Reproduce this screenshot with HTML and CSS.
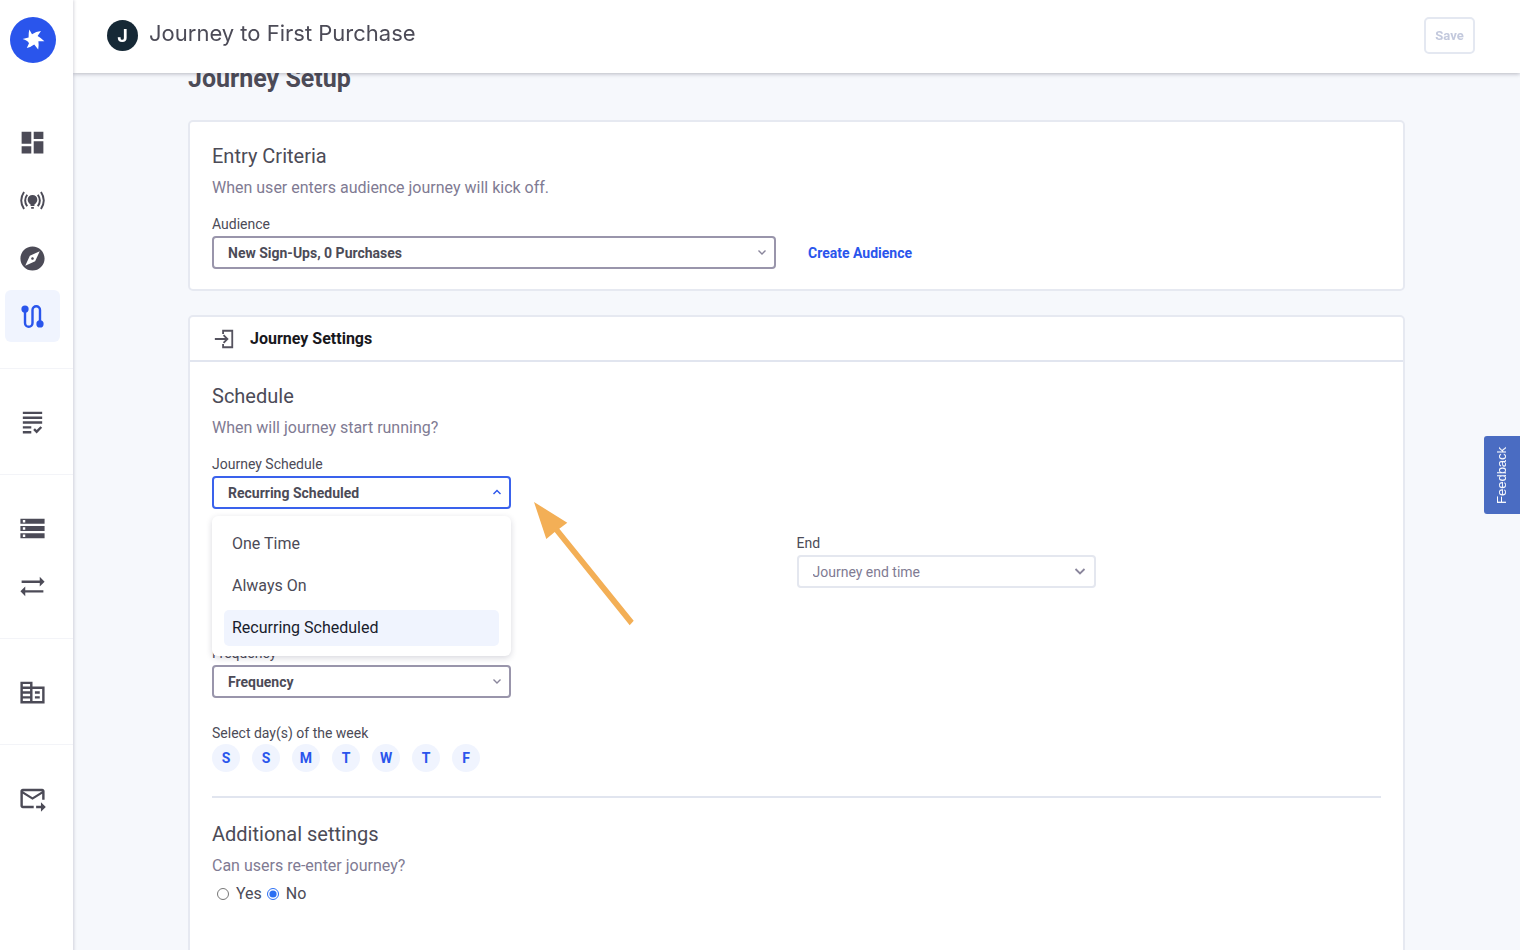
FILE: index.html
```html
<!DOCTYPE html>
<html lang="en">
<head>
<meta charset="utf-8">
<meta name="viewport" content="width=device-width, initial-scale=1">
<title>Journey to First Purchase</title>
<link rel="stylesheet" href="styles.css">
</head>
<body>
<div class="app">
  <nav class="sidebar" aria-label="Main">
    <a class="logo" href="#" aria-label="Home">
      <svg viewBox="0 0 46 46" width="46" height="46"><path fill="#fff" d="M19.300 12.600L22 17.200Q26 14.600 31 14L27.600 19Q31 20.800 34.400 24.300L28.400 24.300Q29 28 28.200 32.400L24.200 27.600Q21 30.200 16.800 30.900L19 26.200Q17.500 23.200 12.600 22L18.600 20.600Q18.400 16.500 19.300 12.600Z"/></svg>
    </a>
    <div class="nav-group">
      <a class="nav-item" href="#" aria-label="Dashboard"><svg class="icon" viewBox="0 0 24 24"><path d="M3 13h8V3H3v10zm0 8h8v-6H3v6zm10 0h8V11h-8v10zm0-18v6h8V3h-8z"/></svg></a>
      <a class="nav-item" href="#" aria-label="Campaigns"><svg class="icon" viewBox="0 0 24 24"><path d="M12 7.400a4 4 0 0 0-4 4c0 1.600.9 2.800 2.400 3.900v1.200h3.200v-1.200c1.500-1.100 2.400-2.300 2.400-3.900a4 4 0 0 0-4-4zM10.900 17.400h2.200v1.400h-2.200z"/><path class="stroke" d="M7.600 7.200c-2.100 3-2.100 6.600 0 9.600M16.400 7.200c2.100 3 2.100 6.600 0 9.600M5 5c-3 4.500-3 9.500 0 14M19 5c3 4.500 3 9.500 0 14"/></svg></a>
      <a class="nav-item" href="#" aria-label="Explore"><svg class="icon" viewBox="0 0 24 24"><path d="M12 10.900c-.61 0-1.100.49-1.100 1.100s.49 1.100 1.100 1.100c.61 0 1.100-.49 1.100-1.100s-.49-1.100-1.100-1.100zM12 2C6.480 2 2 6.480 2 12s4.480 10 10 10 10-4.480 10-10S17.520 2 12 2zm2.190 12.190L6 18l3.810-8.190L18 6l-3.810 8.190z"/></svg></a>
      <a class="nav-item is-active" href="#" aria-label="Journeys" aria-current="page"><svg class="icon" viewBox="0 0 24 24"><circle cx="5.800" cy="5.800" r="3"/><circle cx="18.200" cy="18.200" r="3"/><path class="stroke route" d="M5.800 6v11.400a3.100 3.100 0 0 0 6.200 0V6.600a3.100 3.100 0 0 1 6.200 0V18"/></svg></a>
    </div>
    <div class="nav-group">
      <a class="nav-item" href="#" aria-label="Templates"><svg class="icon" viewBox="0 0 24 24"><path d="M4 7h16v2H4V7zm0 6h16v-2H4v2zm0 4h7v-2H4v2zm0 4h7v-2H4v2zm11.410-2.830L14 16.750l-1.410 1.410L15.410 21 20 16.420 18.580 15l-3.170 3.170zM4 3v2h16V3H4z"/></svg></a>
    </div>
    <div class="nav-group">
      <a class="nav-item" href="#" aria-label="Data"><svg class="icon" viewBox="0 0 24 24"><path d="M2 20h20v-4H2v4zm2-3h2v2H4v-2zM2 4v4h20V4H2zm4 3H4V5h2v2zm-4 7h20v-4H2v4zm2-3h2v2H4v-2z"/></svg></a>
      <a class="nav-item" href="#" aria-label="Integrations"><svg class="icon" viewBox="0 0 24 24"><path d="M22 8l-4-4v3H3v2h15v3l4-4zM2 16l4 4v-3h15v-2H6v-3l-4 4z"/></svg></a>
    </div>
    <div class="nav-group">
      <a class="nav-item" href="#" aria-label="Company"><svg class="icon" viewBox="0 0 24 24"><path d="M12 7V3H2v18h20V7H12zM10 19H4v-2h6v2zm0-4H4v-2h6v2zm0-4H4V9h6v2zm0-4H4V5h6v2zm10 12h-8V9h8v10zm-2-8h-4v2h4v-2zm0 4h-4v2h4v-2z"/></svg></a>
    </div>
    <div class="nav-group">
      <a class="nav-item" href="#" aria-label="Messages"><svg class="icon" viewBox="0 0 24 24"><path d="M20 4H4c-1.100 0-2 .9-2 2v12c0 1.100.9 2 2 2h9v-2H4V8l8 5 8-5v5h2V6c0-1.100-.9-2-2-2zm-8 7L4 6h16l-8 5zm7 4l4 4-4 4v-3h-4v-2h4v-3z"/></svg></a>
    </div>
  </nav>

  <header class="topbar">
    <span class="avatar">J</span>
    <h1 class="topbar-title">Journey to First Purchase</h1>
    <button class="save" type="button" disabled>Save</button>
  </header>

  <main class="content">
    <h2 class="page-title">Journey Setup</h2>

    <section class="card card-body">
      <h3 class="heading">Entry Criteria</h3>
      <p class="sub">When user enters audience journey will kick off.</p>
      <label class="label" for="audience">Audience</label>
      <div class="audience-row">
        <div class="select audience-select">
          <select id="audience"><option>New Sign-Ups, 0 Purchases</option></select>
          <svg class="chevron" viewBox="0 0 12 12"><path d="M2.500 4.500L6 8l3.500-3.500"/></svg>
        </div>
        <a class="create" href="#">Create Audience</a>
      </div>
    </section>

    <section class="card settings">
      <div class="card-head">
        <svg class="enter" viewBox="0 0 24 24"><path d="M11 6.500V3h10v18H11v-3.500M2 12h13.500M11.500 7.800l4.200 4.200-4.200 4.200"/></svg>
        <h3 class="card-title">Journey Settings</h3>
      </div>
      <div class="card-body">
        <h4 class="heading">Schedule</h4>
        <p class="sub">When will journey start running?</p>
        <div class="fields">
          <div class="field">
            <label class="label" for="schedule">Journey Schedule</label>
            <div class="select is-open">
              <select id="schedule"><option>Recurring Scheduled</option></select>
              <svg class="chevron" viewBox="0 0 12 12"><path d="M2.500 8L6 4.500 9.500 8"/></svg>
              <div class="menu" role="listbox" aria-label="Journey Schedule">
                <button class="option" type="button" role="option">One Time</button>
                <button class="option" type="button" role="option">Always On</button>
                <button class="option is-selected" type="button" role="option" aria-selected="true">Recurring Scheduled</button>
              </div>
              <svg class="arrow" viewBox="0 0 100 124"><path d="M0 0L33.300 20.700L25.300 26.700L99.700 118.700L95.700 123.300L20.700 30L12.300 37Z"/></svg>
            </div>
          </div>
          <div class="field end-field">
            <label class="label" for="end">End</label>
            <div class="select is-light">
              <select id="end"><option>Journey end time</option></select>
              <svg class="chevron" viewBox="0 0 12 12"><path d="M1.500 4L6 8.500 10.500 4"/></svg>
            </div>
          </div>
          <div class="field frequency-field">
            <label class="label" for="frequency">Frequency</label>
            <div class="select">
              <select id="frequency"><option>Frequency</option></select>
              <svg class="chevron" viewBox="0 0 12 12"><path d="M2.500 4.500L6 8l3.500-3.500"/></svg>
            </div>
          </div>
        </div>
        <p class="label days-label" id="days-label">Select day(s) of the week</p>
        <div class="days" role="group" aria-labelledby="days-label">
          <button class="day" type="button">S</button>
          <button class="day" type="button">S</button>
          <button class="day" type="button">M</button>
          <button class="day" type="button">T</button>
          <button class="day" type="button">W</button>
          <button class="day" type="button">T</button>
          <button class="day" type="button">F</button>
        </div>
        <hr class="rule">
        <h4 class="heading">Additional settings</h4>
        <p class="sub" id="reenter">Can users re-enter journey?</p>
        <div class="radios" role="radiogroup" aria-labelledby="reenter">
          <label class="radio"><input type="radio" name="reenter">Yes</label>
          <label class="radio"><input type="radio" name="reenter" checked>No</label>
        </div>
      </div>
    </section>
  </main>
  <button class="feedback" type="button">Feedback</button>
</div>
</body>
</html>
```

FILE: styles.css
```css
* { box-sizing: border-box; }

body {
  margin: 0;
  background: #f6f8fc;
  color: #4c4b57;
  font: 16px/20px Roboto, "Liberation Sans", sans-serif;
}

h1, h2, h3, h4, p { margin: 0; }
button, select, input { font: inherit; color: inherit; }
a { text-decoration: none; }

.app {
  display: grid;
  grid-template-columns: 73px minmax(0, 1fr);
  height: 100vh;
  overflow: hidden;
}

/* Sidebar */
.sidebar {
  position: relative;
  z-index: 4;
  padding-top: 17px;
  background: #fff;
  box-shadow: 1px 0 3px rgba(60, 60, 90, .2);
}
.logo {
  display: block;
  width: 46px;
  height: 46px;
  margin: 0 0 26px 10px;
  border-radius: 50%;
  background: #2a55ec;
}
.nav-group {
  display: flex;
  flex-direction: column;
  gap: 6px;
  padding: 27px 5px 26px;
  border-bottom: 1px solid #f3f4f8;
}
.nav-group:last-child { border-bottom: 0; }
.nav-item {
  display: flex;
  align-items: center;
  justify-content: center;
  width: 55px;
  height: 52px;
  border-radius: 6px;
  color: #4c4b57;
}
.nav-item.is-active { background: #f0f4fe; color: #2a55ec; }
.icon { width: 29px; height: 29px; fill: currentColor; }
.icon .stroke { fill: none; stroke: currentColor; stroke-width: 1.600; }
.icon .route { stroke-width: 2; }

/* Top bar */
.topbar {
  position: fixed;
  z-index: 3;
  top: 0;
  left: 73px;
  right: 0;
  display: flex;
  align-items: center;
  height: 73px;
  padding: 0 45px 2px 34px;
  background: #fff;
  box-shadow: 0 1px 4px rgba(40, 40, 60, .3);
}
.avatar {
  width: 31px;
  height: 31px;
  margin-right: 11px;
  border-radius: 50%;
  background: #162936;
  color: #fff;
  font: bold 18px/31px Inter, sans-serif;
  text-align: center;
}
.topbar-title {
  flex: 1;
  padding-bottom: 5px;
  font: 400 22px/28px Inter, sans-serif;
}
.save {
  width: 51px;
  height: 37px;
  padding: 0;
  border: 2px solid #e4e8f1;
  border-radius: 5px;
  background: #fff;
  color: #c3c9dd;
  font-size: 13px;
  font-weight: 700;
}

/* Content */
.content { padding: 67px 115px 0; }
.page-title {
  margin-bottom: 29px;
  font-size: 25px;
  line-height: 24px;
  font-weight: 700;
}
.card {
  border: 2px solid #e6e9f1;
  border-radius: 5px;
  background: #fff;
}
.card-body { padding: 22px 22px 20px; }
.settings { margin-top: 24px; min-height: 680px; }
.card-head {
  display: flex;
  align-items: center;
  gap: 15px;
  height: 45px;
  padding: 0 23px;
  border-bottom: 2px solid #e1e5ef;
}
.card-title { color: #18181c; font-size: 16px; font-weight: 700; }
.enter {
  width: 22px;
  height: 22px;
  fill: none;
  stroke: #55535f;
  stroke-width: 2;
}
.heading {
  margin-bottom: 10px;
  font-size: 20px;
  line-height: 24px;
  font-weight: 400;
}
.sub {
  margin-bottom: 18px;
  color: #7f7b93;
  font-size: 16px;
}
.label {
  display: block;
  margin-bottom: 4px;
  font-size: 14px;
  line-height: 16px;
}

/* Selects */
.select { position: relative; height: 33px; }
.select select {
  width: 100%;
  height: 100%;
  padding: 0 32px 0 14px;
  border: 2px solid #9995ab;
  border-radius: 4px;
  background: #fff;
  appearance: none;
  font-size: 14px;
  font-weight: 700;
}
.chevron {
  position: absolute;
  top: 10px;
  right: 8px;
  width: 12px;
  height: 12px;
  fill: none;
  stroke: #8a869c;
  stroke-width: 1.400;
  pointer-events: none;
}
.is-open select { border-color: #3a62ec; }
.is-open .chevron { stroke: #2a55ec; }
.is-light select { border-color: #e4e7ef; color: #7f7b93; font-weight: 400; }
.is-light .chevron { right: 10px; stroke-width: 1.800; }

.audience-row { display: flex; align-items: center; gap: 32px; }
.audience-select { width: 564px; }
.create { color: #2a55ec; font-size: 14px; font-weight: 700; }

.fields {
  display: grid;
  grid-template-columns: 1fr 1fr;
}
.field { width: 100%; max-width: 299px; }
.end-field { grid-column: 2; grid-row: 2; padding-top: 26px; }
.frequency-field { grid-column: 1; grid-row: 3; padding-top: 57px; }

.menu {
  position: absolute;
  z-index: 1;
  top: 40px;
  left: 0;
  right: 0;
  display: flex;
  flex-direction: column;
  gap: 6px;
  padding: 10px 12px;
  border-radius: 6px;
  background: #fff;
  box-shadow: 0 2px 6px rgba(40, 40, 70, .18);
}
.option {
  height: 36px;
  padding: 0 8px;
  border: 0;
  border-radius: 5px;
  background: none;
  font-size: 16px;
  text-align: left;
}
.option.is-selected { background: #f0f4fe; color: #18202c; }
.arrow {
  position: absolute;
  top: 26px;
  left: 322px;
  width: 100px;
  height: 124px;
  fill: #f3af56;
}

/* Days */
.days-label { margin: 27px 0 3px; }
.days { display: flex; gap: 12px; }
.day {
  width: 28px;
  height: 28px;
  padding: 0;
  border: 0;
  border-radius: 50%;
  background: #f0f4fe;
  color: #2a55ec;
  font-size: 14px;
  font-weight: 700;
}
.rule {
  margin: 24px 0 24px;
  border: 0;
  border-top: 2px solid #e1e5ef;
}

.radios { display: flex; gap: 5px; margin: -10px 0 0 5px; }
.radio { display: flex; align-items: center; gap: 7px; }
.radio input { width: 12px; height: 12px; margin: 0; accent-color: #2b6ff3; }

.feedback {
  position: fixed;
  z-index: 5;
  top: 436px;
  right: 0;
  width: 36px;
  height: 78px;
  padding: 0;
  border: 0;
  border-radius: 0 3px 3px 0;
  background: #4a6cc2;
  color: #fff;
  font: 13px/16px "Liberation Sans", sans-serif;
  writing-mode: vertical-rl;
  transform: rotate(180deg);
}
```
